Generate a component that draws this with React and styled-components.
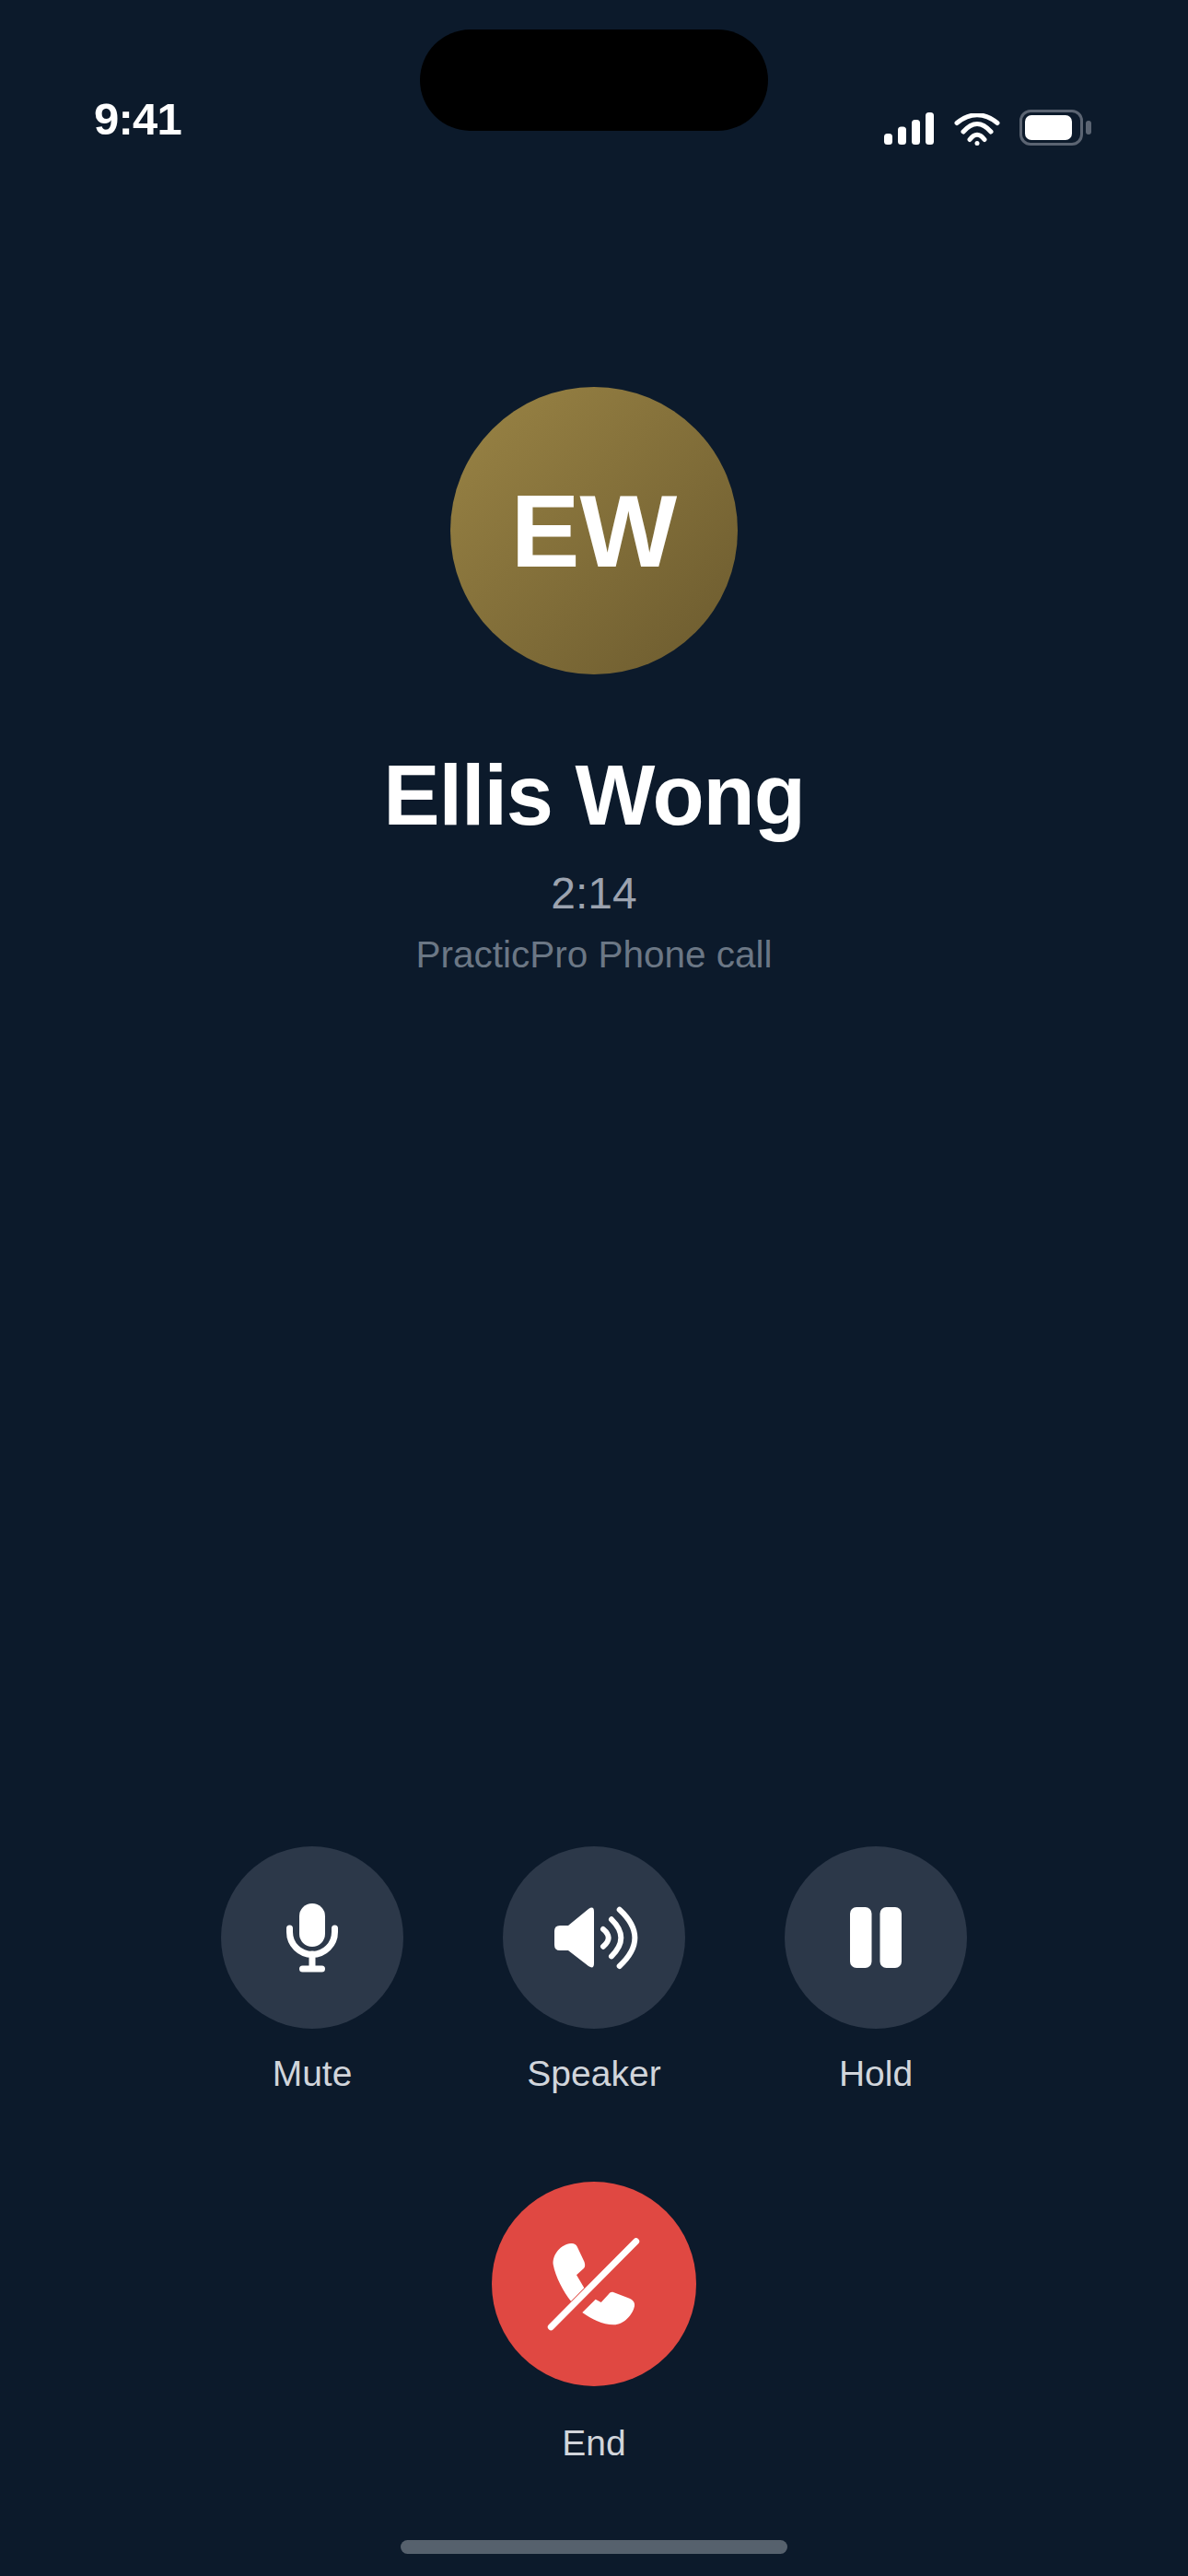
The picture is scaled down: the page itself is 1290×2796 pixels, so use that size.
import styled, { createGlobalStyle } from 'styled-components';

const GlobalStyle = createGlobalStyle`
  html, body {
    margin: 0;
    padding: 0;
    background: #0c1a2b;
  }
  * {
    box-sizing: border-box;
  }
`;

const MicIcon = () => (
  <svg width="80" height="80" viewBox="0 0 80 80">
    <rect x="26" y="3" width="28" height="47" rx="14" fill="#fff" />
    <path
      d="M15.5 30v4a24.5 24.5 0 0 0 49 0v-4M40 58v16M29.5 74h21"
      fill="none"
      stroke="#fff"
      strokeWidth="7"
      strokeLinecap="round"
    />
  </svg>
);

const SpeakerIcon = () => (
  <svg width="100" height="80" viewBox="0 0 100 80">
    <path
      d="M13 27H22L44 9Q50 5 50 12V68Q50 75 44 71L22 54H13Q7 54 7 48V33Q7 27 13 27Z"
      fill="#fff"
    />
    <path
      d="M60 31Q71.4 40.3 60 49.7M69 20.3Q89.6 40.3 69 60.3M77.7 9.7Q111 40.3 77.7 71"
      fill="none"
      stroke="#fff"
      strokeWidth="6"
      strokeLinecap="round"
    />
  </svg>
);

const PauseIcon = () => (
  <svg width="80" height="80" viewBox="0 0 80 80">
    <rect x="12" y="7" width="23.5" height="66" rx="7" fill="#fff" />
    <rect x="44.5" y="7" width="23.5" height="66" rx="7" fill="#fff" />
  </svg>
);

const HangUpIcon = () => (
  <svg width="120" height="120" viewBox="0 0 120 120">
    <path
      d="M35 78.7C27 69 18 52 15.7 39C14.5 28 24 17 35 16C38 15.6 40.5 17 41.7 19.5L49.5 36C50.5 39 50.5 41.5 49 43L41 50.3L49.3 64.3Z"
      fill="#fff"
    />
    <path
      d="M47.3 91L61.7 76.7L67.7 80L76 71C77.5 69 79 68.5 81 69L98 75.5C102.5 77.5 104.5 80 104 84C102 94 92 104 81.7 104.3C70 104.5 57 98 47.3 91Z"
      fill="#fff"
    />
    <path d="M13.3 106.7L105.7 13.7" stroke="#fff" strokeWidth="7" strokeLinecap="round" />
  </svg>
);

const SignalIcon = () => (
  <svg width="54" height="36" viewBox="0 0 54 36">
    <rect x="0" y="23" width="9" height="12" rx="3.5" fill="#fff" />
    <rect x="15" y="15.5" width="9" height="19.5" rx="3.5" fill="#fff" />
    <rect x="30" y="8" width="9" height="27" rx="3.5" fill="#fff" />
    <rect x="45" y="0" width="9" height="35" rx="3.5" fill="#fff" />
  </svg>
);

const WifiIcon = () => (
  <svg width="50" height="35" viewBox="0 0 50 35">
    <path
      d="M3 10.5Q25 -7 47 10.5M10 20Q25 3 40 20M17 28.5Q25 18 33 28.5"
      fill="none"
      stroke="#fff"
      strokeWidth="5"
      strokeLinecap="round"
    />
    <circle cx="25" cy="32.5" r="2.5" fill="#fff" />
  </svg>
);

const controls = [
  { label: 'Mute', icon: <MicIcon /> },
  { label: 'Speaker', icon: <SpeakerIcon /> },
  { label: 'Hold', icon: <PauseIcon /> },
];

const App = () => {
  return (
    <>
      <GlobalStyle />
      <Screen>
        <Island />
        <StatusBar>
          <Clock>9:41</Clock>
          <StatusIcons>
            <SignalIcon />
            <WifiIcon />
            <Battery>
              <BatteryBody>
                <BatteryFill />
              </BatteryBody>
              <BatteryCap />
            </Battery>
          </StatusIcons>
        </StatusBar>

        <Caller>
          <Avatar>EW</Avatar>
          <Name>Ellis Wong</Name>
          <Timer>2:14</Timer>
          <Subtitle>PracticPro Phone call</Subtitle>
        </Caller>

        <Controls>
          {controls.map((el) => (
            <Control key={el.label}>
              <RoundButton>{el.icon}</RoundButton>
              <Label>{el.label}</Label>
            </Control>
          ))}
        </Controls>

        <EndCall>
          <EndButton>
            <HangUpIcon />
          </EndButton>
          <EndLabel>End</EndLabel>
        </EndCall>

        <HomeBar />
      </Screen>
    </>
  );
};

const Screen = styled.div`
  position: relative;
  width: 1290px;
  height: 2796px;
  display: flex;
  flex-direction: column;
  align-items: center;
  overflow: hidden;
  background: #0c1a2b;
  font-family: 'Liberation Sans', Arial, sans-serif;
`;

const Island = styled.div`
  position: absolute;
  top: 32px;
  left: 456px;
  width: 378px;
  height: 110px;
  border-radius: 55px;
  background: #000;
`;

//StatusBar
const StatusBar = styled.div`
  width: 100%;
  height: 170px;
  padding: 102px 105px 0 102px;
  display: flex;
  justify-content: space-between;
  align-items: flex-start;
`;
const Clock = styled.div`
  font-size: 49px;
  line-height: 55px;
  font-weight: 700;
  color: #fff;
  letter-spacing: -0.8px;
`;
const StatusIcons = styled.div`
  display: flex;
  align-items: flex-end;
  gap: 22px;
  margin-top: 18px;
  height: 38px;
`;
const Battery = styled.div`
  display: flex;
  align-items: center;
  gap: 3px;
  margin-left: -1px;
`;
const BatteryBody = styled.div`
  width: 69px;
  height: 39px;
  padding: 3px;
  border: 3px solid #5b6472;
  border-radius: 12px;
`;
const BatteryFill = styled.div`
  width: 51px;
  height: 27px;
  border-radius: 7px;
  background: #fff;
`;
const BatteryCap = styled.div`
  width: 6px;
  height: 15px;
  border-radius: 3px;
  background: #5b6472;
`;

//Caller
const Caller = styled.div`
  margin-top: 250px;
  display: flex;
  flex-direction: column;
  align-items: center;
`;
const Avatar = styled.div`
  width: 312px;
  height: 312px;
  border-radius: 50%;
  display: flex;
  align-items: center;
  justify-content: center;
  background: linear-gradient(135deg, #9a8445 0%, #6b5a2e 100%);
  color: #fff;
  font-size: 112px;
  font-weight: 700;
`;
const Name = styled.h1`
  margin: 76px 0 0;
  font-size: 92px;
  line-height: 110px;
  font-weight: 700;
  color: #fff;
  letter-spacing: -1.1px;
`;
const Timer = styled.div`
  margin-top: 24px;
  font-size: 48px;
  line-height: 56px;
  color: #9ca3af;
`;
const Subtitle = styled.div`
  margin-top: 14px;
  font-size: 40.5px;
  line-height: 48px;
  color: #6b7785;
`;

//Controls
const Controls = styled.div`
  margin-top: auto;
  display: flex;
  justify-content: center;
  gap: 108px;
`;
const Control = styled.div`
  width: 198px;
  display: flex;
  flex-direction: column;
  align-items: center;
`;
const RoundButton = styled.div`
  width: 198px;
  height: 198px;
  border-radius: 50%;
  display: flex;
  align-items: center;
  justify-content: center;
  background: #2c3849;
`;
const Label = styled.div`
  margin-top: 25px;
  font-size: 39px;
  line-height: 48px;
  color: #d1d5db;
  white-space: nowrap;
`;

//End call
const EndCall = styled.div`
  margin-top: 93px;
  display: flex;
  flex-direction: column;
  align-items: center;
`;
const EndButton = styled.div`
  width: 222px;
  height: 222px;
  border-radius: 50%;
  display: flex;
  align-items: center;
  justify-content: center;
  background: #e04842;
`;
const EndLabel = styled(Label)`
  margin-top: 38px;
`;

const HomeBar = styled.div`
  margin-top: 81px;
  margin-bottom: 24px;
  width: 420px;
  height: 15px;
  border-radius: 8px;
  background: #56616d;
`;

export default App;
